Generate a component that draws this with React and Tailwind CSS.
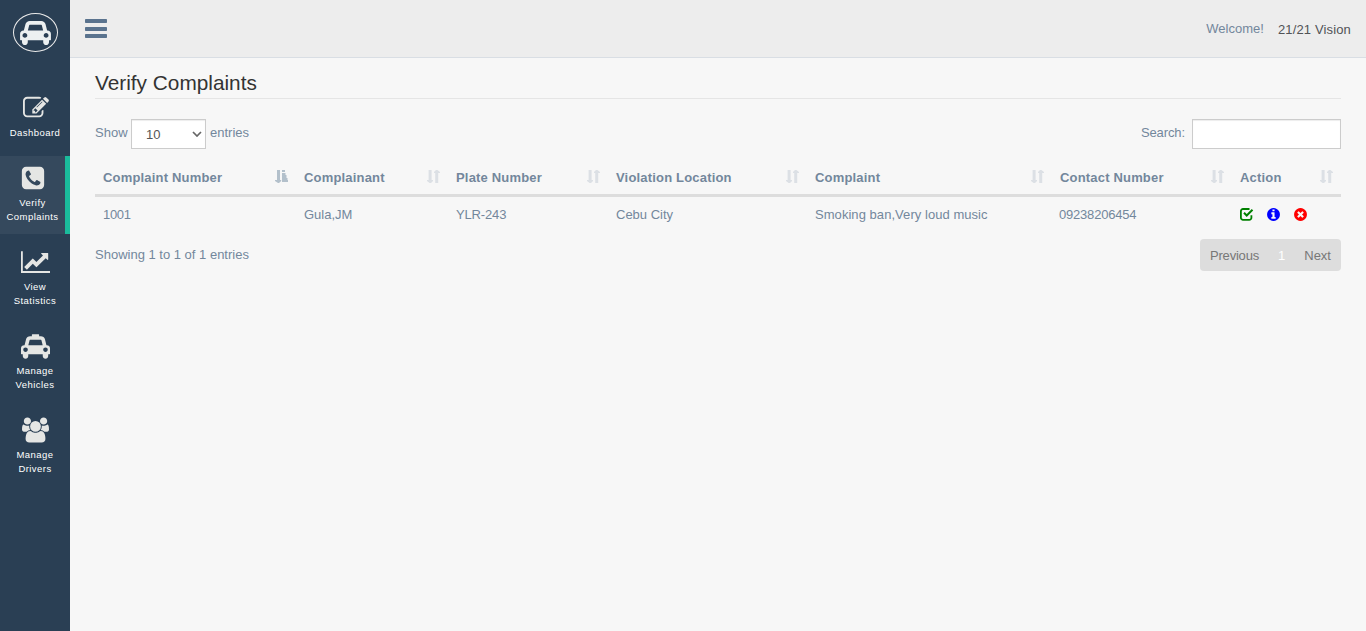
import React from 'react';

const PATHS = {
  car: {
    w: 2048,
    d: 'M480 1088q0-66-47-113t-113-47-113 47-47 113 47 113 113 47 113-47 47-113zm36-320h1016l-89-357q-2-8-14-17.5t-21-9.5h-768q-9 0-21 9.5t-14 17.5zm1372 320q0-66-47-113t-113-47-113 47-47 113 47 113 113 47 113-47 47-113zm160-96v384q0 14-9 23t-23 9h-96v128q0 80-56 136t-136 56-136-56-56-136v-128h-1024v128q0 80-56 136t-136 56-136-56-56-136v-128h-96q-14 0-23-9t-9-23v-384q0-93 65.5-158.5t158.5-65.5h28l105-419q23-94 104-157.5t179-63.5h768q98 0 179 63.5t104 157.5l105 419h28q93 0 158.5 65.5t65.5 158.5z',
  },
  taxi: {
    w: 2048,
    d: 'M480 1088q0-66-47-113t-113-47-113 47-47 113 47 113 113 47 113-47 47-113zm36-320h1016l-89-357q-2-8-14-17.5t-21-9.5h-768q-9 0-21 9.5t-14 17.5zm1372 320q0-66-47-113t-113-47-113 47-47 113 47 113 113 47 113-47 47-113zm160-96v384q0 14-9 23t-23 9h-96v128q0 80-56 136t-136 56-136-56-56-136v-128h-1024v128q0 80-56 136t-136 56-136-56-56-136v-128h-96q-14 0-23-9t-9-23v-384q0-93 65.5-158.5t158.5-65.5h28l105-419q23-94 104-157.5t179-63.5h128v-96q0-14 9-23t23-9h448q14 0 23 9t9 23v96h128q98 0 179 63.5t104 157.5l105 419h28q93 0 158.5 65.5t65.5 158.5z',
  },
  edit: {
    w: 1792,
    d: 'M888 1184l116-116-152-152-116 116v56h96v96h56zm440-720q-16-16-33 1l-350 350q-17 17-1 33t33-1l350-350q17-17 1-33zm80 594v190q0 119-84.5 203.5t-203.5 84.5h-832q-119 0-203.5-84.5t-84.5-203.5v-832q0-119 84.5-203.5t203.5-84.5h832q63 0 117 25 15 7 18 23 3 17-9 29l-49 49q-14 14-32 8-23-6-45-6h-832q-66 0-113 47t-47 113v832q0 66 47 113t113 47h832q66 0 113-47t47-113v-126q0-13 9-22l64-64q15-15 35-7t20 29zm-96-738l288 288-672 672h-288v-288zm444 132l-92 92-288-288 92-92q28-28 68-28t68 28l152 152q28 28 28 68t-28 68z',
  },
  phone: {
    w: 1792,
    d: 'M1408 1193q0-11-2-16t-18-16.5-40.5-25-47.5-26.5-45.5-25-28.5-15q-5-3-19-13t-25-15-21-5q-15 0-36.5 20.5t-39.5 45-38.5 45-33.5 20.5q-7 0-16.5-3.5t-15.5-6.5-17-9.5-14-8.5q-99-55-170-126.5t-127-170.5q-2-3-8.5-14t-9.5-17-6.5-15.5-3.5-16.5q0-13 20.5-33.5t45-38.5 45-39.5 20.5-36.5q0-10-5-21t-15-25-13-19q-3-6-15-28.5t-25-45.5-26.5-47.5-25-40.5-16.5-18-16-2q-48 0-101 22-46 21-80 94.5t-34 130.5q0 16 2.5 34t5 30.5 9 33 10 29.5 12.5 33 11 30q60 164 216.5 320.5t320.5 216.5q6 2 30 11t33 12.5 29.5 10 33 9 30.5 5 34 2.5q57 0 130.5-34t94.5-80q22-53 22-101zm256-777v960q0 119-84.5 203.5t-203.5 84.5h-960q-119 0-203.5-84.5t-84.5-203.5v-960q0-119 84.5-203.5t203.5-84.5h960q119 0 203.5 84.5t84.5 203.5z',
  },
  chart: {
    w: 2048,
    d: 'M2048 1536v128h-2048v-1536h128v1408h1920zm-128-1248v435q0 21-19.5 29.5t-35.5-7.5l-121-121-633 633q-10 10-23 10t-23-10l-233-233-416 416-192-192 585-585q10-10 23-10t23 10l233 233 464-464-121-121q-16-16-7.5-35.5t29.5-19.5h435q14 0 23 9t9 23z',
  },
  users: {
    w: 1920,
    d: 'M593 896q-162 5-265 128h-134q-82 0-138-40.5t-56-118.5q0-353 124-353 6 0 43.5 21t97.5 42.5 119 21.5q67 0 133-23-5 37-5 66 0 139 81 256zm1071 637q0 120-73 189.5t-194 69.5h-874q-121 0-194-69.5t-73-189.5q0-53 3.5-103.5t14-109 26.5-108.5 43-97.5 62-81 85.5-53.5 111.5-20q10 0 43 21.5t73 48 107 48 135 21.5 135-21.5 107-48 73-48 43-21.5q61 0 111.5 20t85.5 53.5 62 81 43 97.5 26.5 108.5 14 109 3.5 103.5zm-1024-1277q0 106-75 181t-181 75-181-75-75-181 75-181 181-75 181 75 75 181zm704 384q0 159-112.5 271.5t-271.5 112.5-271.5-112.5-112.5-271.5 112.5-271.5 271.5-112.5 271.5 112.5 112.5 271.5zm576 225q0 78-56 118.5t-138 40.5h-134q-103-123-265-128 81-117 81-256 0-29-5-66 66 23 133 23 59 0 119-21.5t97.5-42.5 43.5-21q124 0 124 353zm-128-609q0 106-75 181t-181 75-181-75-75-181 75-181 181-75 181 75 75 181z',
  },
  info: {
    w: 1792,
    d: 'M1152 1376v-160q0-14-9-23t-23-9h-96v-512q0-14-9-23t-23-9h-320q-14 0-23 9t-9 23v160q0 14 9 23t23 9h96v320h-96q-14 0-23 9t-9 23v160q0 14 9 23t23 9h448q14 0 23-9t9-23zm-128-896v-160q0-14-9-23t-23-9h-192q-14 0-23 9t-9 23v160q0 14 9 23t23 9h192q14 0 23-9t9-23zm640 416q0 209-103 385.5t-279.5 279.5-385.5 103-385.5-103-279.5-279.5-103-385.5 103-385.5 279.5-279.5 385.5-103 385.5 103 279.5 279.5 103 385.5z',
  },
  times: {
    w: 1792,
    d: 'M1277 1122q0-26-19-45l-181-181 181-181q19-19 19-45 0-27-19-46l-90-90q-19-19-46-19-26 0-45 19l-181 181-181-181q-19-19-45-19-27 0-46 19l-90 90q-19 19-19 46 0 26 19 45l181 181-181 181q-19 19-19 45 0 27 19 46l90 90q19 19 46 19 26 0 45-19l181-181 181 181q19 19 45 19 27 0 46-19l90-90q19-19 19-46zm387-226q0 209-103 385.5t-279.5 279.5-385.5 103-385.5-103-279.5-279.5-103-385.5 103-385.5 279.5-279.5 385.5-103 385.5 103 279.5 279.5 103 385.5z',
  },
};

function Icon({ name, className }) {
  const { w, d } = PATHS[name];
  return (
    <svg viewBox={`0 0 ${w} 1792`} className={`shrink-0 fill-current ${className}`} aria-hidden="true">
      <path d={d} />
    </svg>
  );
}

function CheckIcon() {
  return (
    <svg viewBox="0 0 15 15" className="h-[15px] w-[15px] shrink-0 fill-none stroke-[green]" aria-hidden="true">
      <path
        d="M10.5 2H4a2.1 2.1 0 0 0-2.1 2.1v6.6A2.1 2.1 0 0 0 4 12.8h6.3a2.1 2.1 0 0 0 2.1-2.1V8.2"
        strokeWidth="1.8"
      />
      <path d="M5 5.8L7.7 8.5L13.5 2.7" strokeWidth="2" />
    </svg>
  );
}

function SortIcon({ active }) {
  return active ? (
    <svg viewBox="0 0 13 13" className="mt-[11px] h-[13px] w-[13px] shrink-0 fill-[#b3c0cb]" aria-hidden="true">
      <path d="M2 0h3v10h1.2v1L4 13H3L0 11v-1h2zM7 0h3v2H7zM7 3h3.5v2h1v3h1v2h.5v2H7z" />
    </svg>
  ) : (
    <svg viewBox="0 0 13 13" className="mt-[11px] h-[13px] w-[13px] shrink-0 fill-[#dce0e5]" aria-hidden="true">
      <path d="M1.6 0h3v10h1.4v1L4 13H2.6L0 11v-1h1.6zM8.2 13h3V3H13V2L10.4 0H9L7 2v1h1.2z" />
    </svg>
  );
}

const NAV = [
  { icon: 'edit', size: 'ml-px h-[26px] w-[26px]', lines: ['Dashboard'] },
  { icon: 'phone', size: 'h-[26px] w-[26px]', lines: ['Verify', 'Complaints'], active: true },
  { icon: 'chart', size: 'ml-px h-[26px] w-[29px]', lines: ['View', 'Statistics'] },
  { icon: 'taxi', size: 'mt-px ml-px -mb-px h-[26px] w-[29px]', lines: ['Manage', 'Vehicles'] },
  { icon: 'users', size: 'ml-px h-[26px] w-[27px]', lines: ['Manage', 'Drivers'] },
];

const COLUMNS = [
  { label: 'Complaint Number', width: 'w-[201px]', value: '1001', tracking: 'tracking-[-0.3px]', active: true },
  { label: 'Complainant', width: 'w-[152px]', value: 'Gula,JM' },
  { label: 'Plate Number', width: 'w-[160px]', value: 'YLR-243', tracking: 'tracking-[-0.15px]' },
  { label: 'Violation Location', width: 'w-[199px]', value: 'Cebu City' },
  { label: 'Complaint', width: 'w-[245px]', value: 'Smoking ban,Very loud music', tracking: 'tracking-[0.05px]' },
  { label: 'Contact Number', width: 'w-[180px]', value: '09238206454', tracking: '-ml-px tracking-[-0.2px]' },
  { label: 'Action', width: 'w-[109px]', value: null },
];

function Sidebar() {
  return (
    <aside className="flex w-[70px] shrink-0 flex-col bg-[#2a3f54]">
      <div className="flex h-[86px] justify-center pt-[13px]">
        <div className="flex h-[39px] w-[45px] items-center justify-center rounded-[50%] border border-[#eaeaea] text-[#ecf0f1]">
          <Icon name="car" className="h-[27px] w-[31px]" />
        </div>
      </div>
      <nav className="flex flex-col gap-1.5">
        {NAV.map(({ icon, size, lines, active }) => (
          <a
            key={lines.join(' ')}
            className={`flex flex-col items-center pt-[9px] pb-[10px] ${
              active ? 'border-r-[5px] border-[#1abb9c] bg-[#35495d]' : ''
            }`}
          >
            <Icon name={icon} className={`text-[#e5e6e4] ${size}`} />
            <span className="mt-[5px] flex flex-col items-center text-[9.5px] leading-[14px] tracking-[0.45px] text-white">
              {lines.map((line) => (
                <span key={line}>{line}</span>
              ))}
            </span>
          </a>
        ))}
      </nav>
    </aside>
  );
}

export default function App() {
  return (
    <div className="flex h-[631px] w-[1366px] overflow-hidden bg-[#f7f7f7] font-['Liberation_Sans',sans-serif] text-[13px] leading-[18px] whitespace-nowrap text-[#73879c]">
      <Sidebar />
      <div className="flex min-w-0 flex-1 flex-col">
        <header className="flex h-[58px] justify-between border-b border-[#d9dee4] bg-[#ededed] pr-[15px] pl-[15px]">
          <svg viewBox="0 0 22 19" className="mt-[19px] h-[19px] w-[22px] fill-[#5a738e]" aria-hidden="true">
            <rect width="22" height="4" rx="0.7" />
            <rect y="8" width="22" height="4" rx="0.7" />
            <rect y="15" width="22" height="4" rx="0.7" />
          </svg>
          <div className="flex gap-[14px] pt-5">
            <span>Welcome!</span>
            <span className="pt-px tracking-[0.15px] text-[#515356]">21/21 Vision</span>
          </div>
        </header>
        <main className="flex flex-col pr-[25px] pl-[25px]">
          <h1 className="mt-[13px] h-7 border-b border-[#e5e5e5] text-[20.8px] leading-6 text-[#333]">Verify Complaints</h1>
          <div className="mt-5 flex h-[30px] justify-between">
            <div className="flex">
              <span className="w-8 pt-[5px]">Show</span>
              <span className="ml-1 flex h-[30px] w-[75px] items-center justify-between border border-[#ccc] bg-white pr-[3px] pl-[14px] text-[#555] shadow-[inset_0_1px_1px_rgba(0,0,0,0.075)]">
                <span className="pt-px">10</span>
                <svg viewBox="0 0 10 6" className="h-1.5 w-2.5 fill-none stroke-[#666] stroke-[1.7]" aria-hidden="true">
                  <path d="M1 1l4 4 4-4" />
                </svg>
              </span>
              <span className="ml-1 pt-[5px]">entries</span>
            </div>
            <div className="flex">
              <span className="pt-[5px] tracking-[-0.1px]">Search:</span>
              <span className="ml-[7px] h-[30px] w-[149px] border border-[#ccc] bg-white shadow-[inset_0_1px_1px_rgba(0,0,0,0.075)]" />
            </div>
          </div>
          <div className="mt-[10px] flex h-[38px] border-b-[3px] border-[#ddd] font-bold">
            {COLUMNS.map(({ label, width, active }) => (
              <div key={label} className={`flex justify-between pr-2 pl-2 ${width}`}>
                <span className="pt-[10px] tracking-[0.18px]">{label}</span>
                <SortIcon active={active} />
              </div>
            ))}
          </div>
          <div className="flex h-[36px]">
            {COLUMNS.map(({ label, width, value, tracking = '' }) => (
              <div key={label} className={`flex pt-[9px] pl-2 ${width}`}>
                {value ? (
                  <span className={tracking}>{value}</span>
                ) : (
                  <span className="-ml-px flex gap-3 pt-px">
                    <CheckIcon />
                    <Icon name="info" className="h-[15px] w-[15px] text-[blue]" />
                    <Icon name="times" className="h-[15px] w-[15px] text-[red]" />
                  </span>
                )}
              </div>
            ))}
          </div>
          <div className="mt-[6px] flex h-8 justify-between">
            <span className="pt-[7px]">Showing 1 to 1 of 1 entries</span>
            <div className="flex h-8 w-[141px] justify-between rounded-[4px] bg-[#ddd] px-[10px] pt-2 text-[#777]">
              <span className="tracking-[-0.2px]">Previous</span>
              <span className="text-white">1</span>
              <span>Next</span>
            </div>
          </div>
        </main>
      </div>
    </div>
  );
}
